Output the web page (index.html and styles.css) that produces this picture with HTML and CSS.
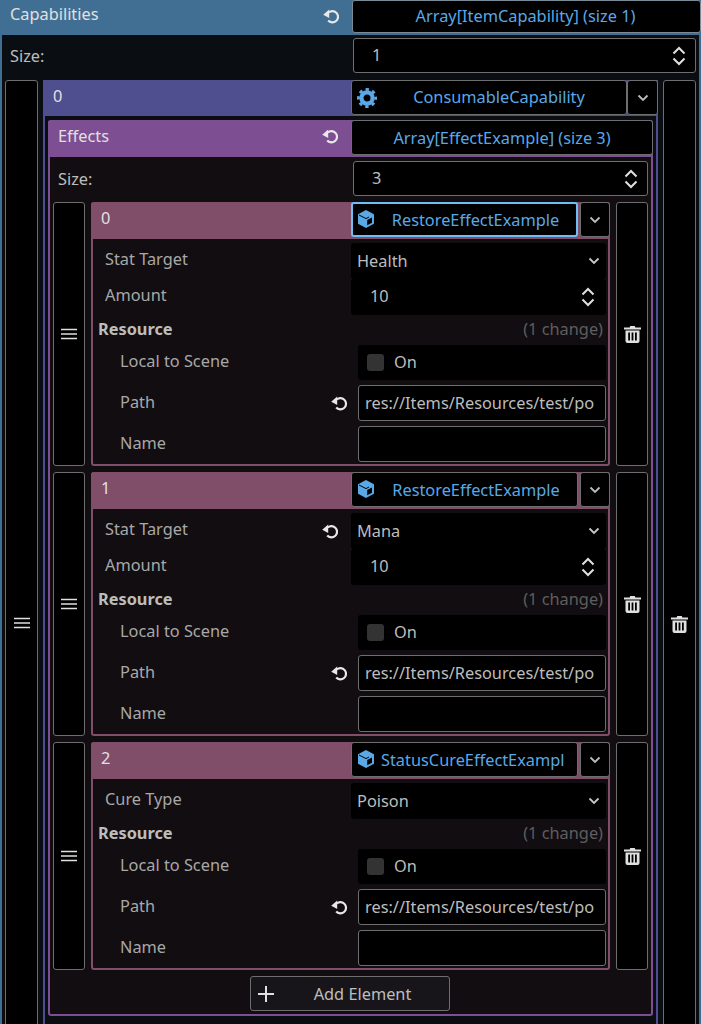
FILE: index.html
```html
<!DOCTYPE html>
<html lang="en">
<head>
<meta charset="utf-8">
<title>Inspector</title>
<link rel="stylesheet" href="styles.css">
</head>
<body>
<svg class="defs" width="0" height="0" aria-hidden="true">
  <symbol id="i-revert" viewBox="0 0 16 16"><path d="M5.8 4.5A5.6 5.6 0 1 1 5.2 12.5" fill="none" stroke="currentColor" stroke-width="2.2"/><path d="M0.2 6.8 6.2 1.6V10Z" fill="currentColor"/></symbol>
  <symbol id="i-chev" viewBox="0 0 12 8"><path d="M1.5 1.5 6 6 10.5 1.5" fill="none" stroke="currentColor" stroke-width="1.8"/></symbol>
  <symbol id="i-updown" viewBox="0 0 14 20"><path d="M1.5 7.5 7 2 12.5 7.5M1.5 12.5 7 18 12.5 12.5" fill="none" stroke="currentColor" stroke-width="2"/></symbol>
  <symbol id="i-menu" viewBox="0 0 16 12"><path d="M0 1.5H16M0 6H16M0 10.5H16" fill="none" stroke="currentColor" stroke-width="1.4"/></symbol>
  <symbol id="i-trash" viewBox="0 0 17 17"><path d="M6.2 0H10.8L11.3 1.4H17V3.4H0V1.4H5.7ZM1.5 4.6H15.5V15A2 2 0 0 1 13.5 17H3.5A2 2 0 0 1 1.5 15ZM4.2 6.6V14.6H6V6.6ZM7.6 6.6V14.6H9.4V6.6ZM11 6.6V14.6H12.8V6.6Z" fill="currentColor" fill-rule="evenodd"/></symbol>
  <symbol id="i-cube" viewBox="0 0 18 18"><path fill="currentColor" fill-rule="evenodd" d="M9 0 17 4.2V13.8L9 18 1 13.8V4.2ZM10.2 9.9V15.3L15 12.8V7.4Z"/><path d="M2 5 9 8.6 12 7" fill="none" stroke="#000" stroke-width="1"/></symbol>
  <symbol id="i-gear" viewBox="0 0 20 20"><circle cx="10" cy="10" r="5.6" fill="none" stroke="currentColor" stroke-width="4.2"/><circle cx="10" cy="10" r="8.6" fill="none" stroke="currentColor" stroke-width="2.8" stroke-dasharray="3.4 3.354" stroke-dashoffset="1.7"/></symbol>
</svg>

<main class="inspector">
  <div class="head head-blue">
    <span class="head-label">Capabilities</span>
    <svg class="ic-revert"><use href="#i-revert"/></svg>
    <div class="btn btn-array btn-top">Array[ItemCapability] (size 1)</div>
  </div>
  <div class="body body-blue">
    <div class="size-row">
      <span class="label">Size:</span>
      <div class="spin spin-outer"><span>1</span><svg class="ic-updown"><use href="#i-updown"/></svg></div>
    </div>
    <div class="list-row list-outer">
      <div class="side side-outer"><svg class="ic-menu"><use href="#i-menu"/></svg></div>
      <div class="panel panel-indigo">
        <div class="head head-indigo">
          <span class="head-label">0</span>
          <div class="btn btn-res btn-cap"><svg class="ic-gear"><use href="#i-gear"/></svg><span class="res-name">ConsumableCapability</span></div>
          <div class="btn btn-drop"><svg class="ic-chev"><use href="#i-chev"/></svg></div>
        </div>
        <div class="panel-indigo-body">
          <div class="panel panel-purple">
            <div class="head head-purple">
              <span class="head-label">Effects</span>
              <svg class="ic-revert"><use href="#i-revert"/></svg>
              <div class="btn btn-array btn-effects">Array[EffectExample] (size 3)</div>
            </div>
            <div class="body-purple">
              <div class="size-row size-inner">
                <span class="label">Size:</span>
                <div class="spin spin-inner"><span>3</span><svg class="ic-updown"><use href="#i-updown"/></svg></div>
              </div>

              <div class="list-row list-inner">
                <div class="side"><svg class="ic-menu"><use href="#i-menu"/></svg></div>
                <div class="panel panel-rose">
                  <div class="head head-rose">
                    <span class="head-label">0</span>
                    <div class="btn btn-res btn-focus"><svg class="ic-cube"><use href="#i-cube"/></svg><span class="res-name">RestoreEffectExample</span></div>
                    <div class="btn btn-drop btn-drop-rose"><svg class="ic-chev"><use href="#i-chev"/></svg></div>
                  </div>
                  <div class="props">
                    <div class="prop"><span class="prop-label">Stat Target</span><div class="select"><span>Health</span><svg class="ic-chev-sel"><use href="#i-chev"/></svg></div></div>
                    <div class="prop"><span class="prop-label">Amount</span><div class="select select-num"><span>10</span><svg class="ic-updown-sm"><use href="#i-updown"/></svg></div></div>
                    <div class="group"><b>Resource</b><span class="changes">(1 change)</span></div>
                    <div class="prop prop-sub"><span class="prop-label">Local to Scene</span><div class="check"><i class="box"></i><span>On</span></div></div>
                    <div class="prop prop-sub"><span class="prop-label">Path</span><svg class="ic-revert ic-revert-sm"><use href="#i-revert"/></svg><div class="input">res://Items/Resources/test/po</div></div>
                    <div class="prop prop-sub"><span class="prop-label">Name</span><div class="input"></div></div>
                  </div>
                </div>
                <div class="side"><svg class="ic-trash"><use href="#i-trash"/></svg></div>
              </div>

              <div class="list-row list-inner">
                <div class="side"><svg class="ic-menu"><use href="#i-menu"/></svg></div>
                <div class="panel panel-rose">
                  <div class="head head-rose">
                    <span class="head-label">1</span>
                    <div class="btn btn-res"><svg class="ic-cube"><use href="#i-cube"/></svg><span class="res-name">RestoreEffectExample</span></div>
                    <div class="btn btn-drop btn-drop-rose"><svg class="ic-chev"><use href="#i-chev"/></svg></div>
                  </div>
                  <div class="props">
                    <div class="prop"><span class="prop-label">Stat Target</span><svg class="ic-revert ic-revert-sel"><use href="#i-revert"/></svg><div class="select"><span>Mana</span><svg class="ic-chev-sel"><use href="#i-chev"/></svg></div></div>
                    <div class="prop"><span class="prop-label">Amount</span><div class="select select-num"><span>10</span><svg class="ic-updown-sm"><use href="#i-updown"/></svg></div></div>
                    <div class="group"><b>Resource</b><span class="changes">(1 change)</span></div>
                    <div class="prop prop-sub"><span class="prop-label">Local to Scene</span><div class="check"><i class="box"></i><span>On</span></div></div>
                    <div class="prop prop-sub"><span class="prop-label">Path</span><svg class="ic-revert ic-revert-sm"><use href="#i-revert"/></svg><div class="input">res://Items/Resources/test/po</div></div>
                    <div class="prop prop-sub"><span class="prop-label">Name</span><div class="input"></div></div>
                  </div>
                </div>
                <div class="side"><svg class="ic-trash"><use href="#i-trash"/></svg></div>
              </div>

              <div class="list-row list-inner">
                <div class="side"><svg class="ic-menu"><use href="#i-menu"/></svg></div>
                <div class="panel panel-rose">
                  <div class="head head-rose">
                    <span class="head-label">2</span>
                    <div class="btn btn-res btn-left"><svg class="ic-cube"><use href="#i-cube"/></svg><span class="res-name">StatusCureEffectExampl</span></div>
                    <div class="btn btn-drop btn-drop-rose"><svg class="ic-chev"><use href="#i-chev"/></svg></div>
                  </div>
                  <div class="props">
                    <div class="prop"><span class="prop-label">Cure Type</span><div class="select"><span>Poison</span><svg class="ic-chev-sel"><use href="#i-chev"/></svg></div></div>
                    <div class="group"><b>Resource</b><span class="changes">(1 change)</span></div>
                    <div class="prop prop-sub"><span class="prop-label">Local to Scene</span><div class="check"><i class="box"></i><span>On</span></div></div>
                    <div class="prop prop-sub"><span class="prop-label">Path</span><svg class="ic-revert ic-revert-sm"><use href="#i-revert"/></svg><div class="input">res://Items/Resources/test/po</div></div>
                    <div class="prop prop-sub"><span class="prop-label">Name</span><div class="input"></div></div>
                  </div>
                </div>
                <div class="side"><svg class="ic-trash"><use href="#i-trash"/></svg></div>
              </div>

              <div class="add-row">
                <div class="add-btn"><svg class="ic-plus" viewBox="0 0 16 16"><path d="M8 0V16M0 8H16" fill="none" stroke="currentColor" stroke-width="2"/></svg><span>Add Element</span></div>
              </div>
            </div>
          </div>
        </div>
      </div>
      <div class="side side-outer"><svg class="ic-trash"><use href="#i-trash"/></svg></div>
    </div>
  </div>
</main>
</body>
</html>
```
FILE: styles.css
```css
* { box-sizing: border-box; }
html, body { margin: 0; padding: 0; }
body {
  width: 701px;
  height: 1024px;
  overflow: hidden;
  background: #0a0e13;
  font-family: "Noto Sans", sans-serif;
  font-size: 16.33px;
  line-height: 22px;
  color: #bdbdbd;
}
.defs { position: absolute; }
svg { display: block; flex: none; }

.head { display: flex; align-items: flex-start; position: relative; }
.head-label { flex: 1; color: #e0e0e0; padding-top: 3px; }

.head-blue { height: 35px; background: #416f93; padding-left: 10px; }
.head-indigo { height: 36px; background: #4f4f90; padding-left: 10px; border-radius: 3px 3px 0 0; }
.head-purple { height: 37px; background: #7e4e92; padding-left: 10px; border-radius: 3px 3px 0 0; }
.head-rose { height: 37px; background: #804e69; padding-left: 10px; border-radius: 3px 3px 0 0; }
.head-indigo .head-label { padding-top: 5px; }
.head-purple .head-label { padding-top: 5px; }
.head-rose .head-label { padding-top: 5px; }

.ic-revert { width: 16px; height: 16px; color: #e8e8e8; margin-right: 13px; margin-top: 8px; }
.ic-revert-sm { margin: 0 11px 0 0; }
.ic-revert-sel { margin: 0 13px 0 0; }

.btn {
  background: #000;
  border: 1px solid #6e6e6e;
  border-radius: 3px;
  color: #5aa8e6;
  display: flex;
  align-items: center;
}
.btn-array { justify-content: center; }
.btn-top { width: 349px; height: 33px; padding: 0 2px 2px 0; border-color: #7a8a96; }
.btn-effects { width: 302px; height: 35px; }
.btn-res { width: 227px; height: 35px; padding: 0 0 0 5px; }
.btn-cap { width: 276px; padding: 0 5px 2px 5px; }
.btn-cap svg { margin-top: 2px; }
.btn-focus { border: 2px solid #6fbdf5; padding-left: 4px; }
.btn-drop { width: 31px; height: 35px; justify-content: center; color: #bdbdbd; }
.btn-drop-rose { width: 30px; margin-left: 2px; }
.res-name { flex: 1; text-align: center; white-space: nowrap; overflow: hidden; }
.btn-left .res-name { text-align: left; padding-left: 6px; }

.ic-gear { width: 20px; height: 20px; color: #5aa8e6; }
.ic-cube { width: 18px; height: 18px; color: #5aa8e6; margin-top: -1px; }
.ic-chev { width: 12px; height: 8px; }

.body-blue { border-left: 2px solid #416f93; border-right: 2px solid #416f93; padding: 3px 3px 0; height: 989px; }
.size-row { display: flex; align-items: center; justify-content: space-between; height: 35px; padding-left: 5px; }
.label { color: #bdbdbd; }
.spin {
  background: #000;
  border: 1px solid #6e6e6e;
  border-radius: 3px;
  height: 35px;
  display: flex;
  align-items: center;
  justify-content: space-between;
  padding: 0 9px 0 18px;
  color: #bdbdbd;
}
.spin span { margin-top: -2px; }
.spin-outer { width: 343px; }
.spin-inner { width: 295px; }
.ic-updown { width: 14px; height: 20px; color: #e0e0e0; }

.list-row { display: flex; }
.list-outer { gap: 5px; margin-top: 7px; }
.side {
  flex: none;
  width: 32px;
  background: #000;
  border: 1px solid #6e6e6e;
  border-radius: 3px;
  display: flex;
  align-items: center;
  justify-content: center;
  color: #e0e0e0;
}
.side-outer { width: 33px; align-items: flex-start; height: 1000px; }
.side-outer .ic-menu { margin-top: 536px; }
.side-outer .ic-trash { margin-top: 535px; }
.ic-menu { width: 16px; height: 12px; }
.ic-trash { width: 17px; height: 17px; }

.panel { flex: none; }
.panel-indigo { width: 615px; border-left: 2px solid #4f4f90; border-right: 2px solid #4f4f90; height: 1000px; }
.panel-indigo .head-indigo { margin: 0 -2px; }
.panel-indigo-body { padding: 4px 3px 0; }
.panel-purple { width: 605px; border: 2px solid #7e4e92; border-top: 0; background: #120d11; border-radius: 3px; }
.panel-purple .head-purple { margin: 0 -2px; }
.body-purple { padding: 4px 3px 3px; }
.size-inner { padding-left: 5px; }
.list-inner { gap: 6px; margin-top: 6px; }
.panel-rose { width: 519px; border: 2px solid #804e69; border-top: 0; border-radius: 3px; }
.panel-rose .head-rose { margin: 0 -2px; }
.props { padding: 4px 2px 2px 0; }
.prop { display: flex; align-items: center; height: 36px; }
.prop-label { flex: 1; padding: 0 0 4px 12px; color: #a8a8a8; }
.select {
  width: 255px;
  height: 36px;
  background: #000;
  border-radius: 3px;
  padding: 0 6px 0 6px;
  display: flex;
  align-items: center;
  justify-content: space-between;
  color: #bdbdbd;
}
.select-num { padding-left: 19px; padding-right: 11px; }
.select-num span { margin-top: -2px; }
.ic-chev-sel { width: 12px; height: 8px; color: #c8c8c8; }
.ic-updown-sm { width: 14px; height: 20px; color: #e0e0e0; }

.group { display: flex; justify-content: space-between; align-items: center; height: 26px; margin: 1px 0 2px; padding: 0 3px 0 5px; }
.group b { color: #bdbdbd; font-weight: 700; }
.changes { color: #5e5e5e; }

.prop-sub { height: 36px; margin-bottom: 5px; }
.prop-sub:last-child { margin-bottom: 0; }
.prop-sub .prop-label { padding: 0 0 2px 27px; }
.check { width: 248px; height: 35px; background: #000; border-radius: 3px; display: flex; align-items: center; padding-left: 9px; gap: 10px; }
.box { width: 17px; height: 17px; border-radius: 3px; background: #333; display: block; }
.input { width: 248px; height: 36px; background: #000; border: 1px solid #6e6e6e; border-radius: 3px; padding: 0 0 0 6px; display: flex; align-items: center; color: #bdbdbd; white-space: nowrap; overflow: hidden; }

.add-row { display: flex; justify-content: center; margin: 6px 2px 0 0; }
.add-btn { width: 200px; height: 35px; background: #17151a; border: 1px solid #6e6e6e; border-radius: 3px; display: flex; align-items: center; padding-left: 7px; color: #bdbdbd; }
.add-btn span { flex: 1; text-align: center; padding-left: 3px; }
.ic-plus { width: 16px; height: 16px; color: #e0e0e0; }
```
